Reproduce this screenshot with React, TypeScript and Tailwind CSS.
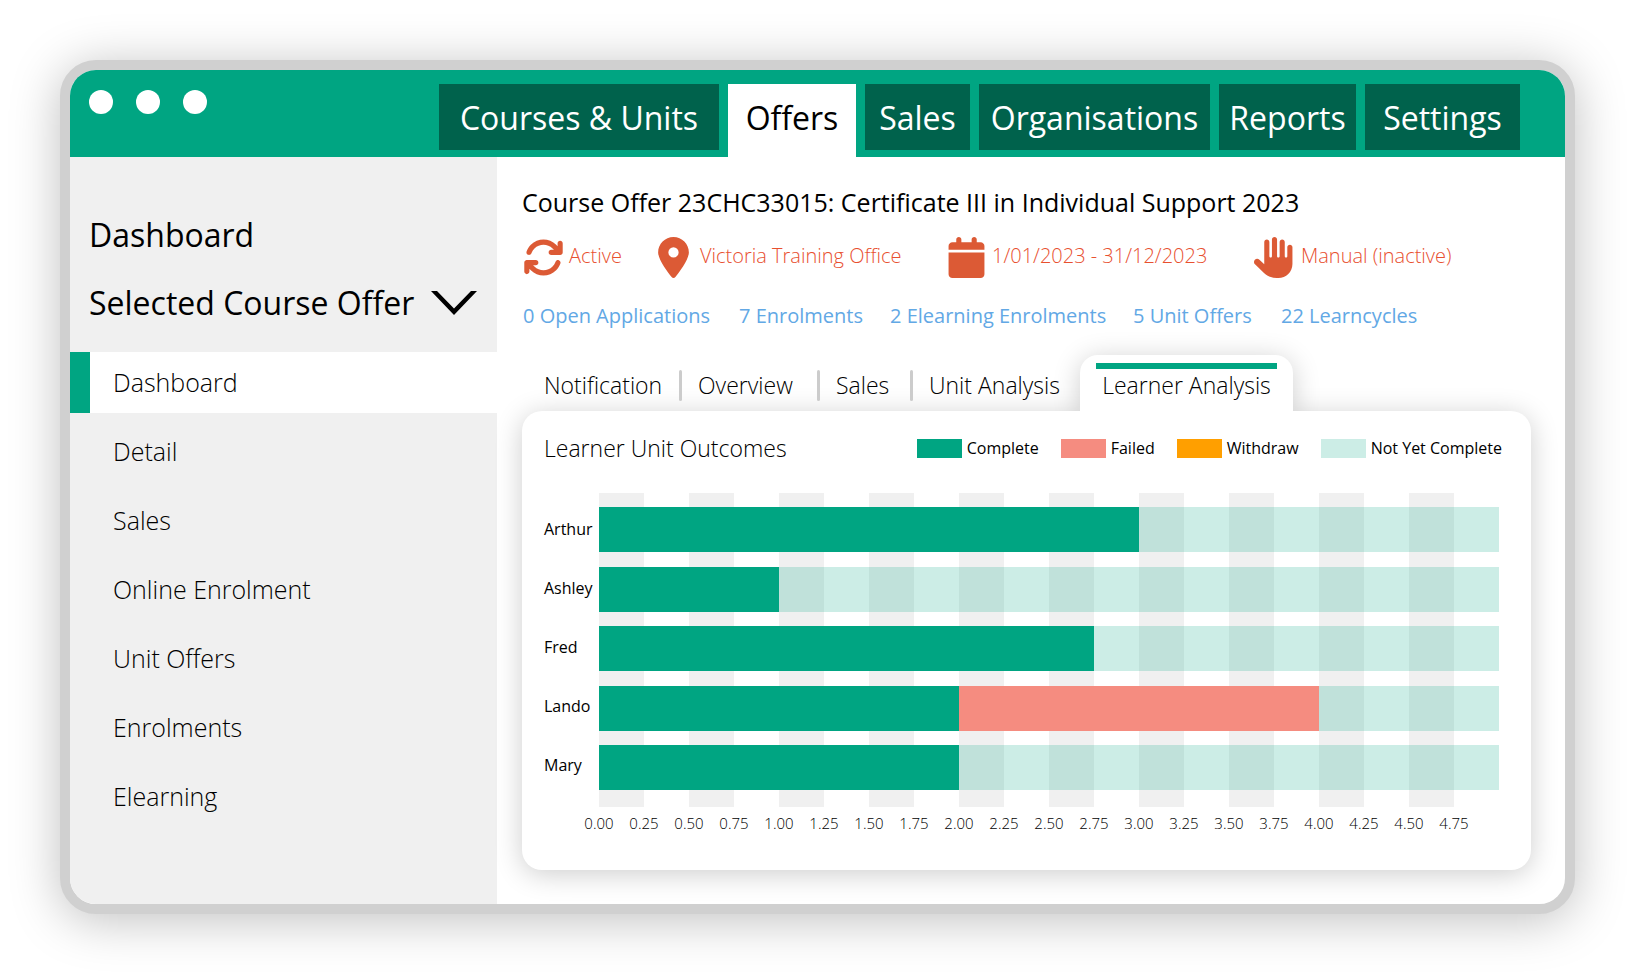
import { useState } from 'react'
import { FaArrowsRotate, FaCalendar, FaHand, FaLocationDot } from 'react-icons/fa6'

interface Learner {
  name: string
  complete: number
  failed: number
  withdraw: number
}

// Units per learner, the axis runs from 0 to MAX_UNITS
const MAX_UNITS = 5

const learners: Learner[] = [
  { name: 'Arthur', complete: 3, failed: 0, withdraw: 0 },
  { name: 'Ashley', complete: 1, failed: 0, withdraw: 0 },
  { name: 'Fred', complete: 2.75, failed: 0, withdraw: 0 },
  { name: 'Lando', complete: 2, failed: 2, withdraw: 0 },
  { name: 'Mary', complete: 2, failed: 0, withdraw: 0 },
]

const navItems = [
  { label: 'Courses & Units', width: 'w-[280px]' },
  { label: 'Offers', width: 'w-[128px]' },
  { label: 'Sales', width: 'w-[105px]' },
  { label: 'Organisations', width: 'w-[231px]' },
  { label: 'Reports', width: 'w-[137px]' },
  { label: 'Settings', width: 'w-[155px]' },
]

const sideItems = ['Dashboard', 'Detail', 'Sales', 'Online Enrolment', 'Unit Offers', 'Enrolments', 'Elearning']

const stats = [
  { label: '0 Open Applications', width: 'w-[216px]' },
  { label: '7 Enrolments', width: 'w-[151px]' },
  { label: '2 Elearning Enrolments', width: 'w-[243px]' },
  { label: '5 Unit Offers', width: 'w-[148px]' },
  { label: '22 Learncycles', width: 'w-[140px]' },
]

const tabs = [
  { label: 'Notification', width: 'w-[160px] pl-[22px]' },
  { label: 'Overview', width: 'w-[138px] pl-4' },
  { label: 'Sales', width: 'w-[93px] pl-4' },
  { label: 'Unit Analysis', width: 'w-[167px] pl-4' },
  { label: 'Learner Analysis', width: 'w-[213px]' },
]

const legend = [
  { label: 'Complete', color: 'bg-[#00a582]' },
  { label: 'Failed', color: 'bg-[#f58c80]' },
  { label: 'Withdraw', color: 'bg-[#ff9f00]' },
  { label: 'Not Yet Complete', color: 'bg-[#00a582]/20' },
]

function Bar({ learner }: { learner: Learner }) {
  const rest = MAX_UNITS - learner.complete - learner.failed - learner.withdraw
  const width = (value: number) => ({ width: `${(value / MAX_UNITS) * 100}%` })

  return (
    <div className="flex h-[45px]">
      <div className="bg-[#00a582]" style={width(learner.complete)} />
      <div className="bg-[#f58c80]" style={width(learner.failed)} />
      <div className="bg-[#ff9f00]" style={width(learner.withdraw)} />
      <div className="bg-[#00a582]/20" style={width(rest)} />
    </div>
  )
}

export default function App() {
  const [nav, setNav] = useState('Offers')
  const [side, setSide] = useState('Dashboard')
  const [tab, setTab] = useState('Learner Analysis')

  const ticks = Array.from({ length: 20 }, (_, i) => (i * 0.25).toFixed(2))

  return (
    <div className="flex min-h-screen bg-white py-[60px] pr-[61px] pl-[60px] font-['Open_Sans',sans-serif] text-black">
      <div className="flex flex-1 flex-col overflow-hidden rounded-[36px] border-10 border-[#d0d0d0] bg-white shadow-[0_6px_50px_rgba(0,0,0,0.25)]">
        {/* Header */}
        <header className="flex h-[87px] shrink-0 items-start bg-[#00a582] pr-[45px] pl-[19px]">
          <div className="flex gap-[23px] pt-5">
            <span className="size-6 rounded-full bg-white" />
            <span className="size-6 rounded-full bg-white" />
            <span className="size-6 rounded-full bg-white" />
          </div>
          <nav className="ml-auto flex gap-[9px] pt-[14px] text-[32px] leading-16">
            {navItems.map((item) => (
              <button
                key={item.label}
                onClick={() => setNav(item.label)}
                className={`${item.width} pt-[2px] text-center whitespace-nowrap ${
                  nav === item.label ? 'bg-white pb-[7px] text-black' : 'mb-[7px] bg-[#00624c] text-white'
                }`}
              >
                {item.label}
              </button>
            ))}
          </nav>
        </header>

        <div className="flex flex-1">
          {/* Sidebar */}
          <aside className="w-[427px] shrink-0 bg-[#f0f0f0] pt-14">
            <h2 className="pl-[19px] text-[32px] leading-[44px]">Dashboard</h2>
            <button className="mt-6 flex w-full items-center justify-between pr-5 pl-[19px] text-[32px] leading-[44px] whitespace-nowrap">
              Selected Course Offer
              <svg viewBox="0 0 46 24" className="h-6 w-[46px]">
                <path d="M0 0h6l17 17.500L40 0h6L23 24z" fill="#000" />
              </svg>
            </button>
            <ul className="mt-[27px] text-[25px] font-light">
              {sideItems.map((item) => (
                <li key={item}>
                  <a
                    href="#"
                    onClick={() => setSide(item)}
                    className={`block ${
                      side === item
                        ? 'mb-1 border-l-20 border-[#00a582] bg-white pl-[23px] leading-[61px]'
                        : 'pl-[43px] leading-[69px]'
                    }`}
                  >
                    {item}
                  </a>
                </li>
              ))}
            </ul>
          </aside>

          {/* Content */}
          <main className="min-w-0 flex-1 pt-[29px] pr-[34px] pb-[34px] pl-[25px]">
            <h1 className="text-[25px] leading-8">Course Offer 23CHC33015: Certificate III in Individual Support 2023</h1>

            <div className="mt-[19px] flex h-[41px] items-start pl-px text-[20px] leading-[37px] font-light whitespace-nowrap text-[#e8502f]">
              <div className="flex w-[135px] gap-[5px]">
                <FaArrowsRotate className="size-[41px] text-[#dc5a35]" />
                Active
              </div>
              <div className="flex w-[290px] gap-[11px]">
                <FaLocationDot className="h-[41px] w-[31px] text-[#dc5a35]" />
                Victoria Training Office
              </div>
              <div className="flex w-[306px] gap-[7px]">
                <FaCalendar className="h-[41px] w-[37px] text-[#dc5a35]" />
                1/01/2023 - 31/12/2023
              </div>
              <div className="flex gap-[6px]">
                <FaHand className="size-[41px] text-[#dc5a35]" />
                Manual (inactive)
              </div>
            </div>

            <div className="mt-6 flex pl-px text-[20px] leading-7 whitespace-nowrap text-[#62a8e5]">
              {stats.map((stat) => (
                <a key={stat.label} href="#" className={stat.width}>
                  {stat.label}
                </a>
              ))}
            </div>

            {/* Tabs */}
            <div className="mt-[25px] flex h-14 text-[23px] font-light whitespace-nowrap">
              {tabs.map((item, index) => (
                <button
                  key={item.label}
                  onClick={() => setTab(item.label)}
                  className={`${item.width} relative z-10 ${
                    tab === item.label
                      ? 'flex flex-col items-center rounded-t-[18px] bg-white px-4 pt-2 leading-8 shadow-[0_4px_28px_rgba(0,0,0,0.2)] [clip-path:inset(-40px_-40px_0_-40px)]'
                      : 'flex items-center justify-between pt-1'
                  }`}
                >
                  {tab === item.label && <span className="h-[6px] w-full bg-[#00a582]" />}
                  {item.label}
                  {tab !== item.label && index < 3 && <span className="h-[31px] w-[3px] rounded-full bg-[#ccc]" />}
                </button>
              ))}
            </div>

            <section className="relative rounded-[20px] bg-white pt-[21px] pb-[34px] pl-[22px] shadow-[0_4px_28px_rgba(0,0,0,0.2)]">
              <div className="flex h-8 items-center justify-between pr-[29px]">
                <h3 className="text-[23px] leading-8 font-light">Learner Unit Outcomes</h3>
                <ul className="flex gap-[22px] text-[16px] leading-[18px] whitespace-nowrap">
                  {legend.map((item) => (
                    <li key={item.label} className="flex items-start gap-[5px]">
                      <span className={`h-[19px] w-[45px] ${item.color}`} />
                      {item.label}
                    </li>
                  ))}
                </ul>
              </div>

              {/* Chart */}
              <div className="mt-[29px] grid grid-cols-[55px_1fr] pr-8">
                <div className="flex flex-col justify-between pt-[14px] pb-[19px] text-[16px] leading-[45px]">
                  {learners.map((learner) => (
                    <div key={learner.name}>{learner.name}</div>
                  ))}
                </div>
                <div className="flex h-[314px] flex-col justify-between bg-[repeating-linear-gradient(90deg,#f0f0f0_0_5%,#fff_5%_10%)] pt-[14px] pb-[17px]">
                  {learners.map((learner) => (
                    <Bar key={learner.name} learner={learner} />
                  ))}
                </div>
                <div className="col-start-2 mt-1 -ml-[2.5%] flex w-full pb-px text-center text-[15px] leading-6 font-light">
                  {ticks.map((tick) => (
                    <span key={tick} className="flex-1">
                      {tick}
                    </span>
                  ))}
                </div>
              </div>
            </section>
          </main>
        </div>
      </div>
    </div>
  )
}
